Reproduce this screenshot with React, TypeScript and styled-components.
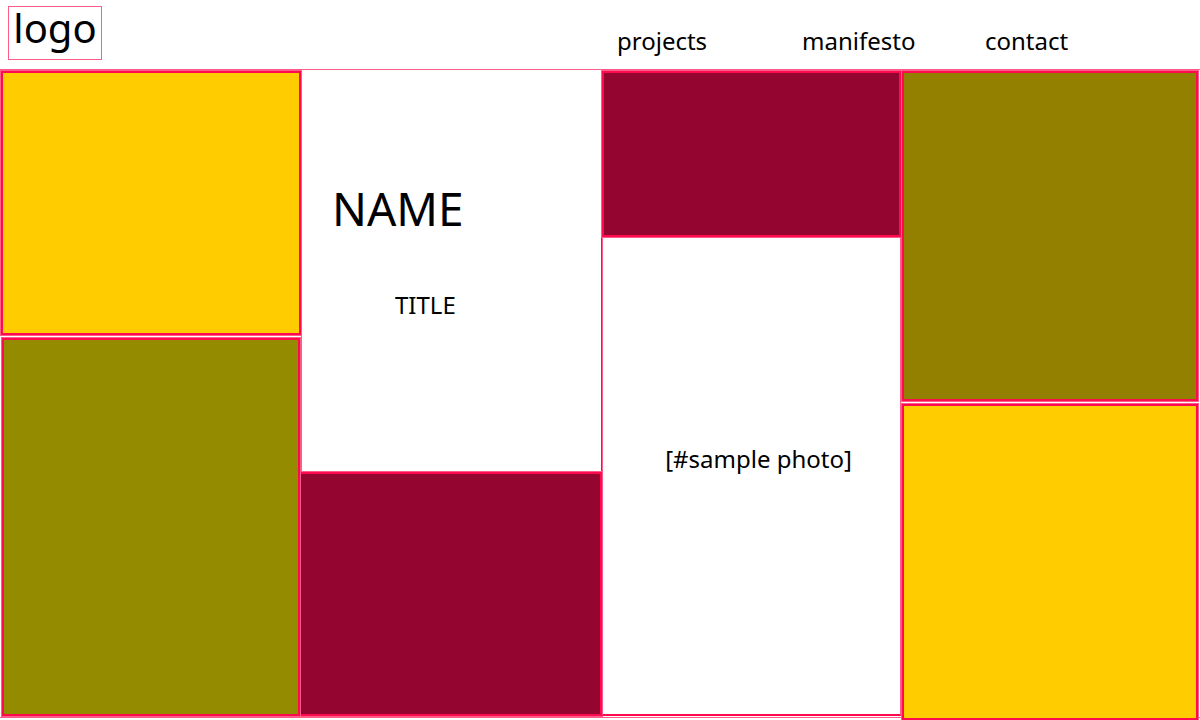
import React from "react";
import styled, { createGlobalStyle } from "styled-components";

const GlobalStyle = createGlobalStyle`
  * { box-sizing: border-box; }
  body {
    margin: 0;
    background: #fff;
    color: #000;
    font-family: "Noto Sans", Verdana, sans-serif;
  }
`;

const line = "#ff5c8a";
const edge = "#ff0a4e";

const Page = styled.div`
  display: flex;
  flex-direction: column;
  height: 100vh;
  min-height: 640px;
  overflow: hidden;
`;

const Header = styled.header`
  display: grid;
  grid-template-columns: 617fr 583fr;
  flex: 0 0 69px;
`;

const Logo = styled.a`
  justify-self: start;
  width: 94px;
  height: 54px;
  margin: 6px 0 0 8px;
  border: 1px solid ${line};
  color: inherit;
  font-size: 40px;
  line-height: 42px;
  text-align: center;
  text-decoration: none;
`;

const Nav = styled.nav`
  display: grid;
  grid-template-columns: 185fr 183fr 215fr;
  padding-top: 25px;
`;

const NavLink = styled.a`
  justify-self: start;
  color: inherit;
  font-size: 24px;
  line-height: 32px;
  text-decoration: none;
`;

const Board = styled.main`
  display: grid;
  grid-template-columns: 301fr 301fr 299fr 299fr;
  grid-template-rows: minmax(0, 1fr);
  flex: 1;
  min-height: 0;
  margin-bottom: 2px;
  padding: 1px 0;
  border-top: 1px solid ${line};
  border-bottom: 1px solid ${line};
`;

const Column = styled.section<{ $rows: string; $gap?: number }>`
  display: grid;
  grid-template-rows: ${(p) => p.$rows};
  row-gap: ${(p) => p.$gap ?? 0}px;
  min-width: 0;
`;

const FirstColumn = styled(Column)`
  padding-left: 1px;
`;

const LastColumn = styled(Column)`
  margin: 0 2px -4px 1px;
`;

const Tile = styled.div<{ $color: string; $open?: boolean; $inset?: boolean }>`
  margin: ${(p) => (p.$inset ? "0 1px" : "0")};
  background: ${(p) => p.$color};
  border: 2px solid ${edge};
  border-left-width: ${(p) => (p.$open ? 0 : 2)}px;
  box-shadow: 0 0 0 1px ${line};
`;

const Intro = styled.div`
  padding: 107px 0 0 30px;
  border-right: 1px solid ${edge};
  border-left: 1px solid ${line};
`;

const Name = styled.h1`
  margin: 0;
  font-size: 46px;
  font-weight: 400;
  line-height: 60px;
`;

const Title = styled.p`
  margin: 51px 0 0;
  padding-left: 63px;
  font-size: 24px;
  line-height: 32px;
`;

const Photo = styled.figure`
  display: flex;
  justify-content: center;
  margin: 0;
  padding: 206px 0 0 14px;
  border: solid ${line};
  border-width: 0 1px 2px;
  border-bottom-color: ${edge};
  font-size: 24px;
  line-height: 32px;
`;

export default function App() {
  return (
    <Page>
      <GlobalStyle />
      <Header>
        <Logo href="#">logo</Logo>
        <Nav>
          <NavLink href="#projects">projects</NavLink>
          <NavLink href="#manifesto">manifesto</NavLink>
          <NavLink href="#contact">contact</NavLink>
        </Nav>
      </Header>
      <Board>
        <FirstColumn $rows="264fr 378fr" $gap={3}>
          <Tile $color="#ffcc00" />
          <Tile $color="#948b00" $inset />
        </FirstColumn>
        <Column $rows="401fr 244fr">
          <Intro>
            <Name>NAME</Name>
            <Title>TITLE</Title>
          </Intro>
          <Tile $color="#940530" $open />
        </Column>
        <Column $rows="166fr 479fr">
          <Tile $color="#940530" />
          <Photo>
            <figcaption>[#sample photo]</figcaption>
          </Photo>
        </Column>
        <LastColumn $rows="330fr 316fr" $gap={3}>
          <Tile $color="#948000" />
          <Tile $color="#ffcc00" />
        </LastColumn>
      </Board>
    </Page>
  );
}
